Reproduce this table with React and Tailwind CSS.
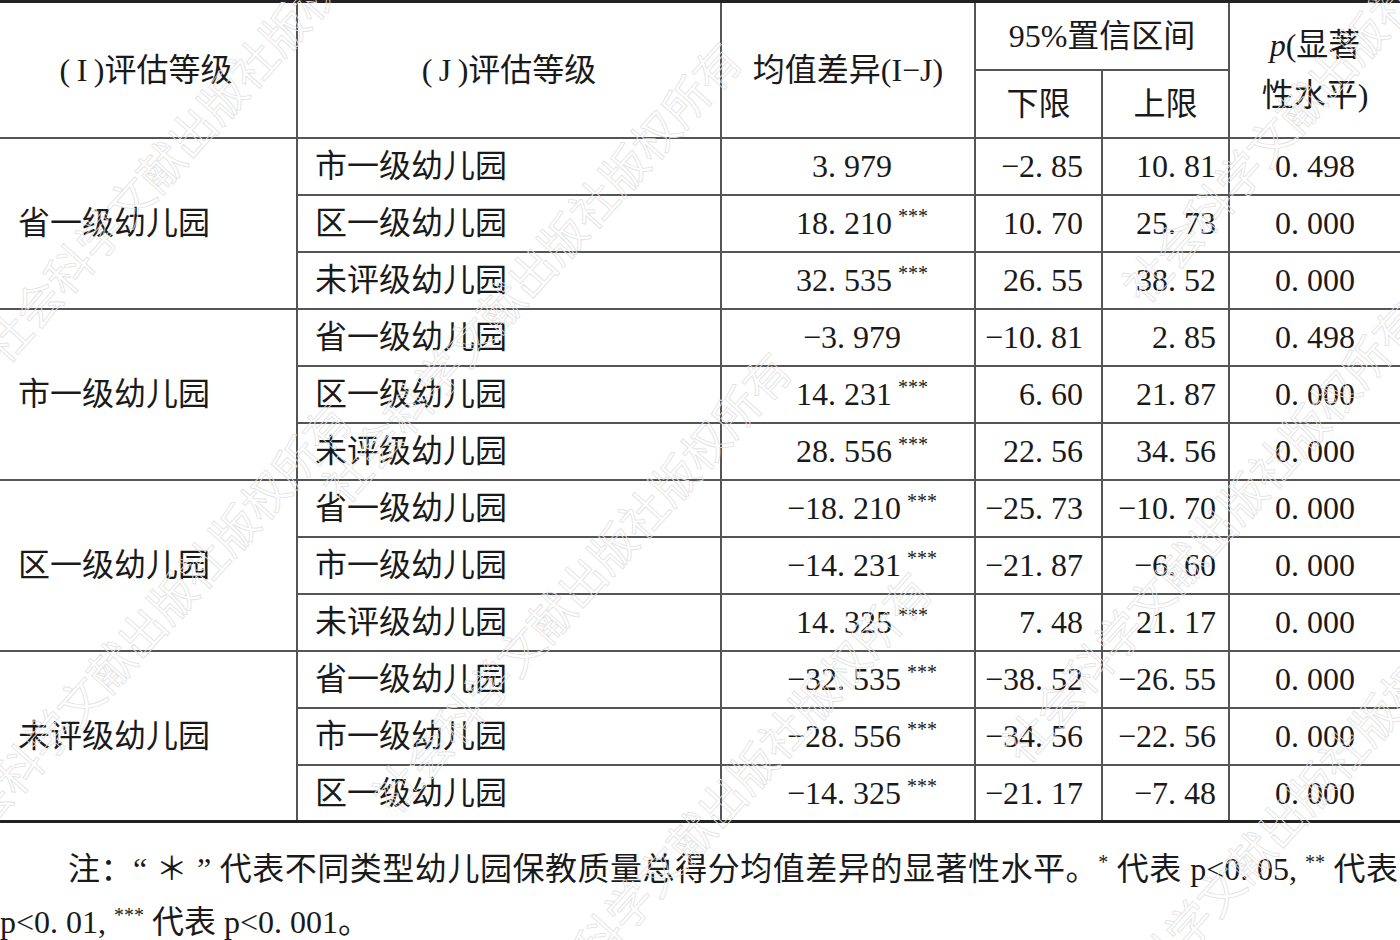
import React from 'react';

const rows = [
  { group: '省一级幼儿园', j: '市一级幼儿园', diff: '3. 979', star: false, lo: '−2. 85', hi: '10. 81', p: '0. 498' },
  { j: '区一级幼儿园', diff: '18. 210', star: true, lo: '10. 70', hi: '25. 73', p: '0. 000' },
  { j: '未评级幼儿园', diff: '32. 535', star: true, lo: '26. 55', hi: '38. 52', p: '0. 000' },
  { group: '市一级幼儿园', j: '省一级幼儿园', diff: '−3. 979', star: false, lo: '−10. 81', hi: '2. 85', p: '0. 498' },
  { j: '区一级幼儿园', diff: '14. 231', star: true, lo: '6. 60', hi: '21. 87', p: '0. 000' },
  { j: '未评级幼儿园', diff: '28. 556', star: true, lo: '22. 56', hi: '34. 56', p: '0. 000' },
  { group: '区一级幼儿园', j: '省一级幼儿园', diff: '−18. 210', star: true, lo: '−25. 73', hi: '−10. 70', p: '0. 000' },
  { j: '市一级幼儿园', diff: '−14. 231', star: true, lo: '−21. 87', hi: '−6. 60', p: '0. 000' },
  { j: '未评级幼儿园', diff: '14. 325', star: true, lo: '7. 48', hi: '21. 17', p: '0. 000' },
  { group: '未评级幼儿园', j: '省一级幼儿园', diff: '−32. 535', star: true, lo: '−38. 52', hi: '−26. 55', p: '0. 000' },
  { j: '市一级幼儿园', diff: '−28. 556', star: true, lo: '−34. 56', hi: '−22. 56', p: '0. 000' },
  { j: '区一级幼儿园', diff: '−14. 325', star: true, lo: '−21. 17', hi: '−7. 48', p: '0. 000' },
];

// faint diagonal watermark over the table, left edge = start point
const marks = [
  'left-[-10px] top-[330px]',
  'left-[330px] top-[470px]',
  'left-[1130px] top-[270px]',
  'left-[-60px] top-[830px]',
  'left-[380px] top-[780px]',
  'left-[1010px] top-[730px]',
  'left-[520px] top-[1000px]',
  'left-[1080px] top-[1020px]',
];

const Stars = () => (
  <span className="relative -top-[11px] ml-[6px] text-[20px]">***</span>
);

const cellLine = 'border-[#555] border-[2px]';
const thick = 'border-b-[3px] border-b-[#222]';

export default function App() {
  return (
    <div className="relative w-[1400px] h-[940px] overflow-hidden bg-white text-[#1a1a1a] font-['Liberation_Serif','Noto_Sans_CJK_SC',serif] text-[32px]">
      <table className="w-[1400px] table-fixed border-collapse">
        <colgroup>
          <col className="w-[297px]" />
          <col className="w-[424px]" />
          <col className="w-[254px]" />
          <col className="w-[127px]" />
          <col className="w-[127px]" />
          <col className="w-[171px]" />
        </colgroup>
        <thead>
          <tr className="h-[68px] border-t-[3px] border-t-[#222]">
            <th rowSpan={2} className={`${cellLine} border-l-0 border-t-[3px] border-t-[#222] font-normal text-center pr-[4px]`}>
              (&thinsp;I&thinsp;)评估等级
            </th>
            <th rowSpan={2} className={`${cellLine} border-t-[3px] border-t-[#222] font-normal text-center`}>
              (&thinsp;J&thinsp;)评估等级
            </th>
            <th rowSpan={2} className={`${cellLine} border-t-[3px] border-t-[#222] font-normal text-center`}>
              均值差异(I−J)
            </th>
            <th colSpan={2} className={`${cellLine} border-t-[3px] border-t-[#222] font-normal text-center`}>
              95%置信区间
            </th>
            <th rowSpan={2} className={`${cellLine} border-r-0 border-t-[3px] border-t-[#222] font-normal text-center leading-[50px]`}>
              <i>p</i>(显著<br />性水平)
            </th>
          </tr>
          <tr className="h-[68px]">
            <th className={`${cellLine} font-normal text-center`}>下限</th>
            <th className={`${cellLine} font-normal text-center`}>上限</th>
          </tr>
        </thead>
        <tbody>
          {rows.map((r, i) => {
            const last = i === rows.length - 1 ? thick : '';
            return (
              <tr key={i} className={`h-[57px] ${last}`}>
                {r.group && (
                  <td rowSpan={3} className={`${cellLine} border-l-0 pl-[18px] ${i === 9 ? thick : ''}`}>
                    {r.group}
                  </td>
                )}
                <td className={`${cellLine} pl-[17px] ${last}`}>{r.j}</td>
                <td className={`${cellLine} text-center pl-[28px] ${last}`}>
                  {r.diff}
                  {r.star ? <Stars /> : <span className="inline-block w-[20px]" />}
                </td>
                <td className={`${cellLine} text-right pr-[18px] ${last}`}>{r.lo}</td>
                <td className={`${cellLine} text-right pr-[12px] ${last}`}>{r.hi}</td>
                <td className={`${cellLine} border-r-0 text-center ${last}`}>{r.p}</td>
              </tr>
            );
          })}
        </tbody>
      </table>

      <div className="mt-[22px] leading-[49px]">
        <div className="pl-[68px] pr-[2px] text-justify [text-align-last:justify]">
          注：“ ＊ ” 代表不同类型幼儿园保教质量总得分均值差异的显著性水平。
          <span className="relative -top-[11px] text-[20px]">*</span> 代表 p&lt;0. 05,
          <span className="relative -top-[11px] text-[20px] ml-[8px]">**</span> 代表
        </div>
        <div>
          p&lt;0. 01,
          <span className="relative -top-[11px] text-[20px] ml-[8px]">***</span> 代表 p&lt;0. 001。
        </div>
      </div>

      {marks.map((m, i) => (
        <span
          key={i}
          className={`pointer-events-none absolute ${m} origin-left -rotate-[48deg] whitespace-nowrap text-[46px] leading-none text-transparent font-['Noto_Sans_CJK_SC',sans-serif] [-webkit-text-stroke:0.8px_#e2e2e2]`}
        >
          社会科学文献出版社版权所有
        </span>
      ))}
    </div>
  );
}
